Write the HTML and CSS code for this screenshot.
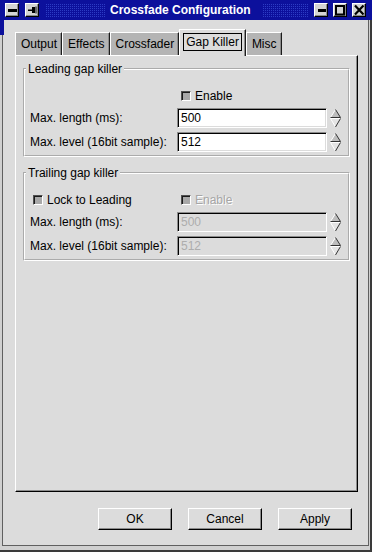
FILE: index.html
```html
<!DOCTYPE html>
<html lang="en">
<head>
    <meta charset="UTF-8">
    <title>Crossfade Configuration</title>
    <link rel="stylesheet" href="styles.css">
</head>
<body>
    <div class="window">
        <div class="titlebar">
            <div class="tb-left">
                <span class="tb-btn"><svg width="12" height="12"><rect x="2" y="5" width="9" height="3"/></svg></span>
                <span class="tb-btn"><svg width="12" height="12"><rect x="2" y="5.5" width="5" height="1.5"/><rect x="6" y="3" width="3" height="6"/><rect x="9.5" y="2.5" width="1" height="7"/></svg></span>
            </div>
            <div class="tb-mid">
                <span class="dots dots-left"></span>
                <span class="tb-title">Crossfade Configuration</span>
                <span class="dots dots-right"></span>
            </div>
            <div class="tb-right">
                <span class="tb-btn"><svg width="12" height="12"><rect x="3" y="5" width="8" height="3"/></svg></span>
                <span class="tb-btn"><svg width="12" height="12"><rect x="2" y="2" width="8" height="8.5" fill="none" stroke="#000" stroke-width="2"/></svg></span>
                <span class="tb-btn"><svg width="12" height="12"><path d="M2 1.5 L10.5 10.5 M10.5 1.5 L2 10.5" stroke="#000" stroke-width="2.2"/></svg></span>
            </div>
        </div>

        <div class="client">
            <div class="tabs">
                <div class="tab">Output</div>
                <div class="tab">Effects</div>
                <div class="tab">Crossfader</div>
                <div class="tab active"><span class="focus">Gap Killer</span></div>
                <div class="tab">Misc</div>
            </div>

            <div class="page">
                <div class="group">
                    <div class="group-title">Leading gap killer</div>
                    <div class="row">
                        <span></span>
                        <span class="check"><span class="box"></span>Enable</span>
                        <span></span>
                    </div>
                    <div class="row">
                        <span class="label">Max. length (ms):</span>
                        <span class="entry">500</span>
                        <span class="spin"><svg width="11" height="20"><polygon points="5.5,1.5 10.5,9.5 0.5,9.5" fill="#bdbdbd"/><polyline points="0.5,9.5 5.5,1.5" fill="none" stroke="#fff"/><polyline points="5.5,1.5 10.5,9.5 0.5,9.5" fill="none" stroke="#333"/><polygon points="0.5,10.5 10.5,10.5 5.5,19" fill="#e4e4e4"/><polyline points="5.5,19 0.5,10.5 10.5,10.5" fill="none" stroke="#fff"/><polyline points="10.5,10.5 5.5,19" fill="none" stroke="#333"/></svg></span>
                    </div>
                    <div class="row">
                        <span class="label">Max. level (16bit sample):</span>
                        <span class="entry">512</span>
                        <span class="spin"><svg width="11" height="20"><polygon points="5.5,1.5 10.5,9.5 0.5,9.5" fill="#bdbdbd"/><polyline points="0.5,9.5 5.5,1.5" fill="none" stroke="#fff"/><polyline points="5.5,1.5 10.5,9.5 0.5,9.5" fill="none" stroke="#333"/><polygon points="0.5,10.5 10.5,10.5 5.5,19" fill="#e4e4e4"/><polyline points="5.5,19 0.5,10.5 10.5,10.5" fill="none" stroke="#fff"/><polyline points="10.5,10.5 5.5,19" fill="none" stroke="#333"/></svg></span>
                    </div>
                </div>

                <div class="group trailing">
                    <div class="group-title">Trailing gap killer</div>
                    <div class="row">
                        <span class="check first"><span class="box"></span>Lock to Leading</span>
                        <span class="check disabled"><span class="box"></span>Enable</span>
                        <span></span>
                    </div>
                    <div class="row">
                        <span class="label">Max. length (ms):</span>
                        <span class="entry disabled">500</span>
                        <span class="spin"><svg width="11" height="20"><polygon points="5.5,1.5 10.5,9.5 0.5,9.5" fill="#bdbdbd"/><polyline points="0.5,9.5 5.5,1.5" fill="none" stroke="#fff"/><polyline points="5.5,1.5 10.5,9.5 0.5,9.5" fill="none" stroke="#333"/><polygon points="0.5,10.5 10.5,10.5 5.5,19" fill="#e4e4e4"/><polyline points="5.5,19 0.5,10.5 10.5,10.5" fill="none" stroke="#fff"/><polyline points="10.5,10.5 5.5,19" fill="none" stroke="#333"/></svg></span>
                    </div>
                    <div class="row">
                        <span class="label">Max. level (16bit sample):</span>
                        <span class="entry disabled">512</span>
                        <span class="spin"><svg width="11" height="20"><polygon points="5.5,1.5 10.5,9.5 0.5,9.5" fill="#bdbdbd"/><polyline points="0.5,9.5 5.5,1.5" fill="none" stroke="#fff"/><polyline points="5.5,1.5 10.5,9.5 0.5,9.5" fill="none" stroke="#333"/><polygon points="0.5,10.5 10.5,10.5 5.5,19" fill="#e4e4e4"/><polyline points="5.5,19 0.5,10.5 10.5,10.5" fill="none" stroke="#fff"/><polyline points="10.5,10.5 5.5,19" fill="none" stroke="#333"/></svg></span>
                    </div>
                </div>
            </div>

            <div class="buttons">
                <button class="btn">OK</button>
                <button class="btn">Cancel</button>
                <button class="btn">Apply</button>
            </div>
        </div>
    </div>
</body>
</html>
```

FILE: styles.css
```css
body {
    margin: 0;
    font-family: "Liberation Sans", Arial, sans-serif;
    font-size: 12px;
    color: #000;
    background: #dcdcdc;
}

/* window frame */
.window {
    position: relative;
    width: 372px;
    height: 552px;
    display: flex;
    flex-direction: column;
    background: #d0d0d0;
    box-shadow: inset -2px -2px 0 #3a3a3a;
    overflow: hidden;
}

.window::before {
    content: '';
    position: absolute;
    left: 0;
    top: 20px;
    width: 4px;
    height: 15px;
    background: #0c109c;
    z-index: 2;
}

/* title bar */
.titlebar {
    flex: none;
    height: 20px;
    display: flex;
    align-items: center;
    background: #0c109c;
}

.tb-left {
    display: flex;
    gap: 6px;
    padding-left: 5px;
}

.tb-right {
    display: flex;
    gap: 5px;
    padding-right: 6px;
}

.tb-btn {
    display: flex;
    width: 14px;
    height: 14px;
    box-sizing: border-box;
    background: #d4d4d4;
    border: 1px solid;
    border-color: #fff #000 #000 #fff;
    box-shadow: inset -1px -1px 0 #8c8c8c;
}

.tb-mid {
    flex: 1;
    display: flex;
    align-items: center;
    height: 14px;
    min-width: 0;
}

.dots {
    height: 14px;
    background-image: conic-gradient(from 90deg at 1px 1px, #2c3cc4 25%, transparent 0);
    background-size: 2px 2px;
}

.dots-left {
    width: 60px;
    margin-left: 6px;
}

.dots-right {
    flex: 1;
    margin: 0 5px 0 11px;
}

.tb-title {
    margin-left: 5px;
    color: #fff;
    font-weight: bold;
    white-space: nowrap;
}

/* dialog area */
.client {
    flex: 1;
    display: flex;
    flex-direction: column;
    min-height: 0;
    margin: 0 3px 6px 2px;
    padding: 9px 10px 15px 12px;
    border: 1px solid #606060;
    border-top: 0;
    background: #dcdcdc;
}

/* notebook tabs */
.tabs {
    flex: none;
    display: flex;
    align-items: flex-end;
    height: 26px;
}

.tab {
    display: flex;
    align-items: center;
    height: 23px;
    box-sizing: border-box;
    padding: 0 4px 0 5px;
    background: #b4b4b4;
    border-top: 1px solid #fff;
    border-left: 1px solid #fff;
    border-right: 1px solid #1c1c1c;
    box-shadow: inset -1px 0 0 #8c8c8c;
    white-space: nowrap;
}

.tab.active {
    position: relative;
    z-index: 1;
    align-items: flex-start;
    height: 27px;
    margin-bottom: -1px;
    padding: 3px 3px 0 3px;
    background: #dcdcdc;
}

.focus {
    display: inline-block;
    line-height: 14px;
    padding: 1px 2px;
    border: 1px solid #000;
}

.page {
    flex: 1;
    display: flex;
    flex-direction: column;
    padding: 12px 7px 0 7px;
    background: #dcdcdc;
    border-top: 1px solid #fff;
    border-left: 1px solid #fff;
    border-right: 1px solid #000;
    border-bottom: 1px solid #000;
    box-shadow: inset -1px -1px 0 #8c8c8c;
}

/* frames */
.group {
    display: flex;
    flex-direction: column;
    padding: 0 7px 3px 5px;
    border: 2px groove #fff;
}

.group.trailing {
    margin-top: 15px;
}

.group-title {
    align-self: flex-start;
    margin: -8px 0 8px -4px;
    padding: 0 2px;
    line-height: 14px;
    background: #dcdcdc;
}

.row {
    display: flex;
    align-items: center;
    height: 20px;
    margin-top: 4px;
}

.group-title + .row {
    margin-top: 0;
}

.row > :nth-child(1) {
    width: 147px;
    flex: none;
}

.row > :nth-child(2) {
    width: 150px;
    flex: none;
}

.row > :nth-child(3) {
    width: 14px;
    flex: none;
}

.label {
    white-space: nowrap;
}

.check {
    display: flex;
    align-items: center;
    gap: 4px;
    margin-top: 3px;
    padding-left: 4px;
    box-sizing: border-box;
    white-space: nowrap;
}

.check.first {
    padding-left: 3px;
}

.check.disabled {
    color: #a6a6a6;
    text-shadow: 1px 1px 0 #fff;
}

.box {
    width: 10px;
    height: 10px;
    box-sizing: border-box;
    background: #a8a8a8;
    border: 1px solid;
    border-color: #505050 #fff #fff #505050;
    box-shadow: inset 1px 1px 0 #1a1a1a;
}

.entry {
    height: 20px;
    box-sizing: border-box;
    padding-left: 3px;
    line-height: 18px;
    background: #fff;
    border: 1px solid;
    border-color: #8c8c8c #fff #fff #8c8c8c;
    box-shadow: inset 1px 1px 0 #000, inset -1px -1px 0 #dcdcdc;
}

.entry.disabled {
    background: #dcdcdc;
    color: #adadad;
}

.spin {
    display: flex;
    height: 20px;
    padding-left: 3px;
    box-sizing: border-box;
}

/* dialog buttons */
.buttons {
    flex: none;
    display: flex;
    justify-content: flex-end;
    gap: 16px;
    margin-top: 16px;
    padding-right: 6px;
}

.btn {
    width: 74px;
    height: 22px;
    box-sizing: border-box;
    padding: 0;
    font: inherit;
    color: #000;
    background: #dcdcdc;
    border: 1px solid;
    border-color: #fff #000 #000 #fff;
    box-shadow: inset -1px -1px 0 #8c8c8c;
}
```
